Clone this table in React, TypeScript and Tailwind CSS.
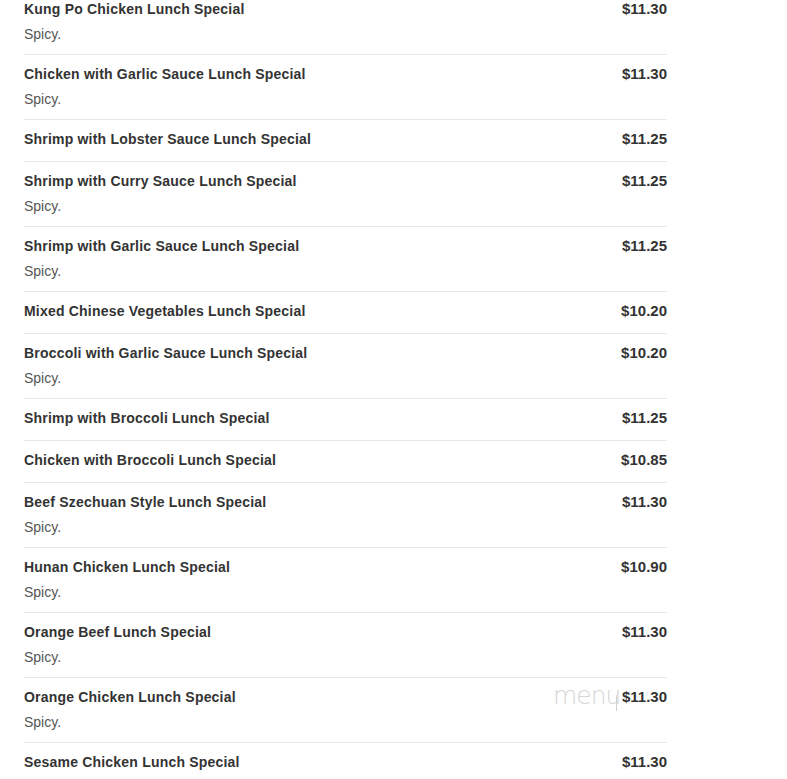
import React from "react";

const items: { name: string; price: string; desc?: string }[] = [
  { name: "Kung Po Chicken Lunch Special", price: "$11.30", desc: "Spicy." },
  { name: "Chicken with Garlic Sauce Lunch Special", price: "$11.30", desc: "Spicy." },
  { name: "Shrimp with Lobster Sauce Lunch Special", price: "$11.25" },
  { name: "Shrimp with Curry Sauce Lunch Special", price: "$11.25", desc: "Spicy." },
  { name: "Shrimp with Garlic Sauce Lunch Special", price: "$11.25", desc: "Spicy." },
  { name: "Mixed Chinese Vegetables Lunch Special", price: "$10.20" },
  { name: "Broccoli with Garlic Sauce Lunch Special", price: "$10.20", desc: "Spicy." },
  { name: "Shrimp with Broccoli Lunch Special", price: "$11.25" },
  { name: "Chicken with Broccoli Lunch Special", price: "$10.85" },
  { name: "Beef Szechuan Style Lunch Special", price: "$11.30", desc: "Spicy." },
  { name: "Hunan Chicken Lunch Special", price: "$10.90", desc: "Spicy." },
  { name: "Orange Beef Lunch Special", price: "$11.30", desc: "Spicy." },
  { name: "Orange Chicken Lunch Special", price: "$11.30", desc: "Spicy." },
  { name: "Sesame Chicken Lunch Special", price: "$11.30" },
];

export default function App() {
  return (
    <div
      className="relative w-[787px] h-[779px] overflow-hidden bg-white"
      style={{ fontFamily: '"Liberation Sans", Arial, sans-serif' }}
    >
      <div className="mt-[-10px] ml-[24px] w-[643px]">
        {items.map((it, i) => (
          <div
            key={i}
            className={`flex justify-between pt-[9px] ${it.desc ? "pb-[10px]" : "pb-[12px]"} ${
              i < items.length - 1 ? "border-b border-[#e8e8e8]" : ""
            }`}
          >
            <div>
              <div className="text-[14px] leading-[20px] font-bold text-[#333] tracking-[0.2px]">{it.name}</div>
              {it.desc && (
                <div className="mt-[5px] text-[14px] leading-[20px] text-[#555]">{it.desc}</div>
              )}
            </div>
            <div className="text-[15px] leading-[20px] font-bold text-[#333]">{it.price}</div>
          </div>
        ))}
      </div>
      <div className="absolute left-[553px] top-[683px] flex items-start pointer-events-none">
        <span
          className="text-[25px] leading-[25px] text-[#d6d6d6] tracking-[-1px]"
          style={{ fontFamily: '"DejaVu Sans", sans-serif', fontWeight: 200 }}
        >
          menu
        </span>
        <span className="block w-[1px] h-[16px] bg-[#d0d0d0] mt-[12px] ml-[-4px]" />
      </div>
    </div>
  );
}
